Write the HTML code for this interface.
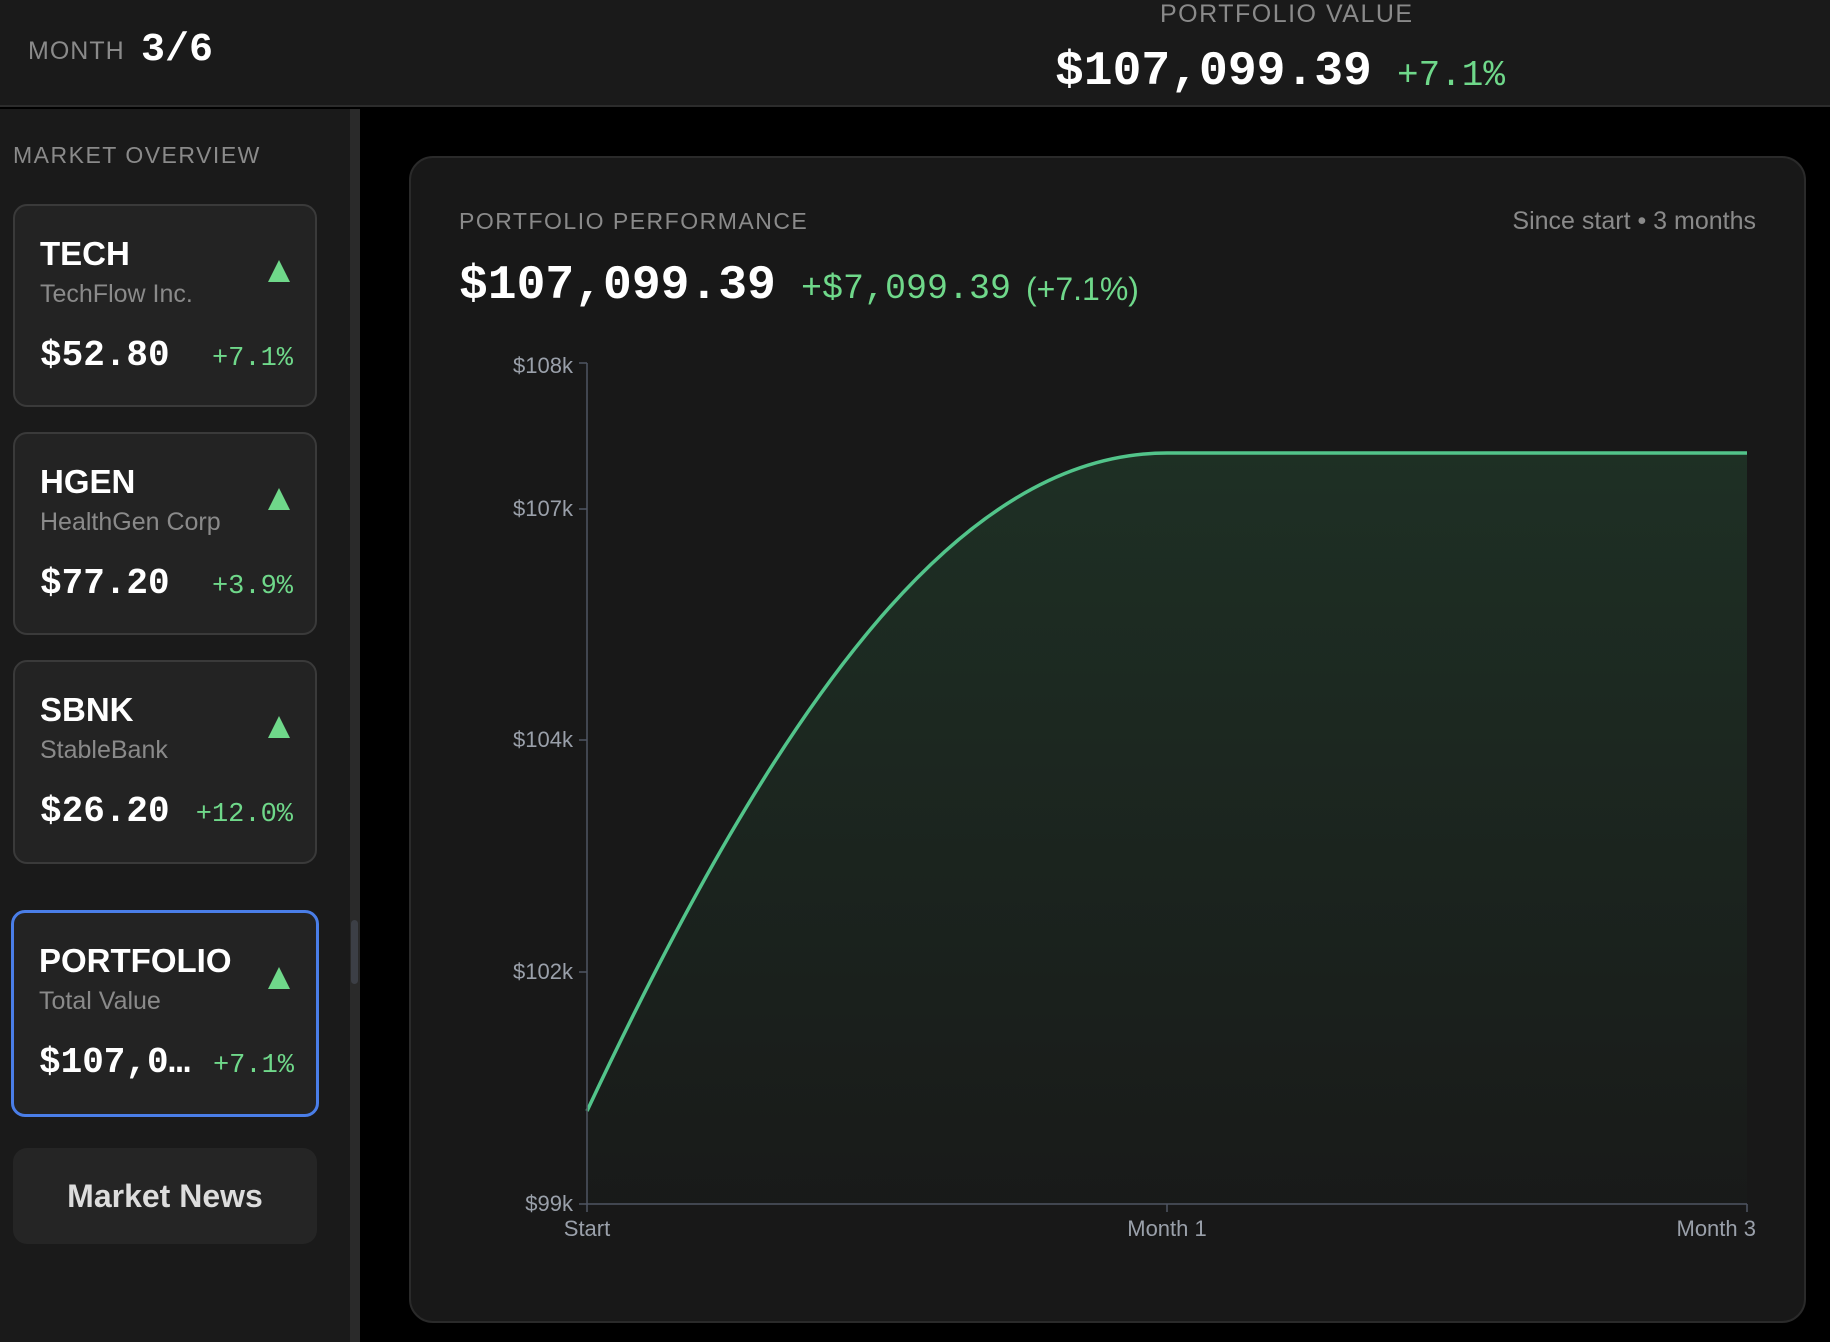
<!DOCTYPE html>
<html><head><meta charset="utf-8"><style>
*{margin:0;padding:0;box-sizing:border-box}
body{width:1830px;height:1342px;background:#000;position:relative;overflow:hidden;font-family:"Liberation Sans",sans-serif;color:#fff}
.a{position:absolute;white-space:nowrap;line-height:1}
.mono{font-family:"Liberation Mono",monospace;font-weight:bold}
.g{color:#6fd88a}
.gray{color:#8a8a8a}
.card{position:absolute;left:13px;width:304px;background:#232323;border:2px solid #3a3a3a;border-radius:14px}
.tri{position:absolute;left:253px;width:0;height:0;border-left:11px solid transparent;border-right:11px solid transparent;border-bottom:22px solid #6fd88a}
.sym{left:25px;font-size:33px;font-weight:bold}
.sub{left:25px;font-size:25px;color:#8a8a8a}
.pr{left:25px;font-size:36px}
.ch{right:22px;font-size:27px;font-weight:normal}
.yl{font-size:22px;color:#9aa0aa;text-align:right;width:80px}
</style></head><body>
<div style="position:absolute;left:0;top:0;width:1830px;height:107px;background:#1a1a1a;border-bottom:2px solid #2c2c2c"></div>
<div class="a gray" style="left:28px;top:39px;font-size:25px;letter-spacing:1px">MONTH</div>
<div class="a mono" style="left:141px;top:31px;font-size:40px">3/6</div>
<div class="a gray" style="left:1160px;top:2px;font-size:25px;letter-spacing:1.5px">PORTFOLIO VALUE</div>
<div class="a mono" style="left:1055px;top:48px;font-size:48px">$107,099.39</div>
<div class="a mono g" style="left:1397px;top:58px;font-size:36px;font-weight:normal">+7.1%</div>

<div style="position:absolute;left:0;top:109px;width:350px;height:1233px;background:#1a1a1a"></div>
<div style="position:absolute;left:350px;top:109px;width:10px;height:1233px;background:#2a2a2a"></div>
<div style="position:absolute;left:351px;top:920px;width:7px;height:64px;background:#3c3f46;border-radius:4px"></div>

<div class="a gray" style="left:13px;top:144px;font-size:23px;letter-spacing:1.5px">MARKET OVERVIEW</div>

<div class="card" style="top:204px;height:203px">
<div class="a sym" style="top:31px">TECH</div><div class="tri" style="top:54px"></div>
<div class="a sub" style="top:76px">TechFlow Inc.</div>
<div class="a mono pr" style="top:132px">$52.80</div><div class="a mono g ch" style="top:140px">+7.1%</div></div>

<div class="card" style="top:432px;height:203px">
<div class="a sym" style="top:31px">HGEN</div><div class="tri" style="top:54px"></div>
<div class="a sub" style="top:76px">HealthGen Corp</div>
<div class="a mono pr" style="top:132px">$77.20</div><div class="a mono g ch" style="top:140px">+3.9%</div></div>

<div class="card" style="top:660px;height:204px">
<div class="a sym" style="top:31px">SBNK</div><div class="tri" style="top:54px"></div>
<div class="a sub" style="top:76px">StableBank</div>
<div class="a mono pr" style="top:132px">$26.20</div><div class="a mono g ch" style="top:140px">+12.0%</div></div>

<div class="card" style="top:910px;height:207px;left:11px;width:308px;border:3px solid #4a7ee8">
<div class="a sym" style="top:31px">PORTFOLIO</div><div class="tri" style="top:54px;left:254px"></div>
<div class="a sub" style="top:76px">Total Value</div>
<div class="a mono pr" style="top:132px">$107,0…</div><div class="a mono g ch" style="top:140px">+7.1%</div></div>

<div style="position:absolute;left:13px;top:1148px;width:304px;height:96px;background:#252525;border-radius:14px;color:#ddd;font-size:32px;font-weight:bold;text-align:center;line-height:96px">Market News</div>

<div style="position:absolute;left:409px;top:156px;width:1397px;height:1167px;background:#181818;border:2px solid #2a2a2a;border-radius:24px"></div>
<div class="a gray" style="left:459px;top:210px;font-size:23px;letter-spacing:1.5px">PORTFOLIO PERFORMANCE</div>
<div class="a gray" style="right:74px;top:209px;font-size:25px">Since start • 3 months</div>
<div class="a mono" style="left:459px;top:262px;font-size:48px">$107,099.39</div>
<div class="a mono g" style="left:801px;top:272px;font-size:35px;font-weight:normal">+$7,099.39</div>
<div class="a g" style="left:1026px;top:273px;font-size:32px">(+7.1%)</div>

<svg style="position:absolute;left:0;top:0" width="1830" height="1342">
<defs><linearGradient id="f" x1="0" y1="0" x2="0" y2="1"><stop offset="0" stop-color="#4ade80" stop-opacity="0.12"/><stop offset="1" stop-color="#4ade80" stop-opacity="0.01"/></linearGradient></defs>
<path d="M587,1111 C780,700 960,453 1167,453 L1747,453 L1747,1204 L587,1204 Z" fill="url(#f)"/>
<path d="M587,1111 C780,700 960,453 1167,453 L1747,453" fill="none" stroke="#52c48a" stroke-width="3.5"/>
<g stroke="#4f5563" stroke-width="1.5" fill="none">
<path d="M587,363 V1204 H1747"/>
<path d="M579,363 H587 M579,509 H587 M579,740 H587 M579,972 H587 M579,1204 H587"/>
<path d="M587,1204 V1212 M1167,1204 V1212 M1747,1204 V1212"/>
</g></svg>
<div class="a yl" style="left:493px;top:355px">$108k</div>
<div class="a yl" style="left:493px;top:498px">$107k</div>
<div class="a yl" style="left:493px;top:729px">$104k</div>
<div class="a yl" style="left:493px;top:961px">$102k</div>
<div class="a yl" style="left:493px;top:1193px">$99k</div>
<div class="a yl" style="left:547px;top:1218px;text-align:center">Start</div>
<div class="a yl" style="left:1107px;top:1218px;width:120px;text-align:center">Month 1</div>
<div class="a yl" style="left:1636px;top:1218px;width:120px">Month 3</div>
</body></html>
